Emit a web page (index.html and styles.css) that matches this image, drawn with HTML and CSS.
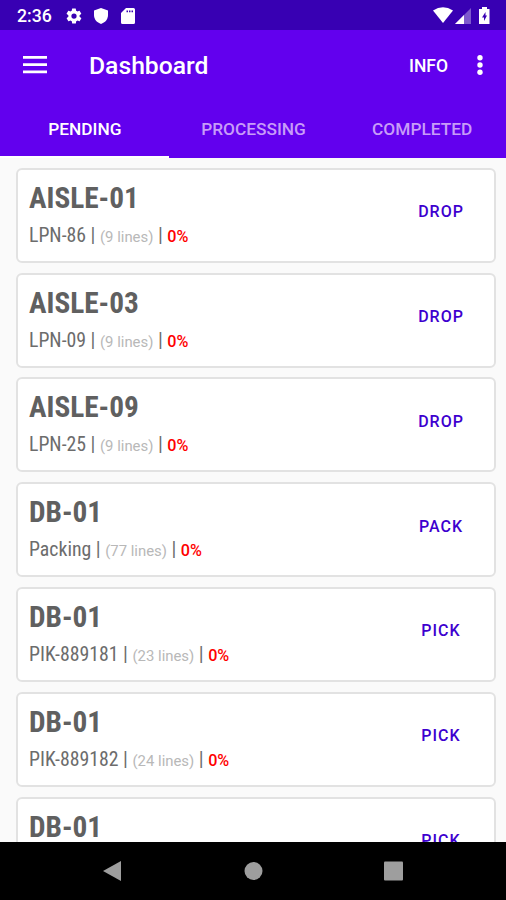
FILE: index.html
```html
<!DOCTYPE html>
<html lang="en">
<head>
<meta charset="utf-8">
<title>Dashboard</title>
<link rel="stylesheet" href="styles.css">
</head>
<body>
<div class="status">
  <span class="time">2:36</span>
  <svg class="gear" width="18" height="18" viewBox="0 0 24 24"><path d="M19.4 13a7.500 7.500 0 0 0 0-2l2.100-1.600a.5.5 0 0 0 .1-.6l-2-3.500a.5.5 0 0 0-.6-.2l-2.500 1a7.300 7.300 0 0 0-1.700-1l-.4-2.700a.5.5 0 0 0-.5-.4h-4a.5.5 0 0 0-.5.4L9 5.100a7.700 7.700 0 0 0-1.700 1l-2.500-1a.5.5 0 0 0-.6.2l-2 3.500a.5.5 0 0 0 .1.6L4.500 11a8 8 0 0 0 0 2l-2.100 1.600a.5.5 0 0 0-.1.600l2 3.500c.1.200.4.300.6.200l2.500-1a7.300 7.300 0 0 0 1.700 1l.4 2.700c0 .2.200.4.500.4h4c.300 0 .5-.2.500-.4l.4-2.700a7.700 7.700 0 0 0 1.700-1l2.500 1c.2.100.5 0 .6-.2l2-3.500a.5.500 0 0 0-.1-.6zM12 15.500a3.500 3.500 0 1 1 0-7 3.500 3.500 0 0 1 0 7z"/></svg>
  <svg class="shield" width="14" height="16" viewBox="0 0 14 16"><path d="M7 0 L14 2.500 V7 C14 11.500 11 14.500 7 16 C3 14.500 0 11.500 0 7 V2.500 Z"/></svg>
  <svg class="sd" width="14" height="16" viewBox="0 0 14 16"><path fill-rule="evenodd" d="M5 0H12.500Q14 0 14 1.500V14.500Q14 16 12.500 16H1.500Q0 16 0 14.500V5ZM5.500 2.500V4.300H7V2.500ZM8 2.500V4.300H9.500V2.500ZM10.500 2.500V4.300H12V2.500Z"/></svg>
  <svg class="signals" width="60" height="18" viewBox="0 0 60 18"><path d="M0 3.500Q10 -3 20 3.500L10 16Z"/><path d="M38 1V17H22Z" opacity=".35"/><path d="M31 8V17H22Z"/><path fill-rule="evenodd" d="M49 0H54V2H56.500V17H46V2H49ZM52.500 5L49 10.500H51V14L54 8.500H52.500Z"/></svg>
</div>
<header class="appbar">
  <svg class="menu" width="24" height="18" viewBox="0 0 24 18"><path d="M0 0H24V2.700H0ZM0 7.300H24V10H0ZM0 14.500H24V17.200H0Z"/></svg>
  <h1>Dashboard</h1>
  <span class="info">INFO</span>
  <svg class="more" width="6" height="22" viewBox="0 0 6 22"><circle cx="3" cy="2.800" r="2.700"/><circle cx="3" cy="10" r="2.700"/><circle cx="3" cy="17.200" r="2.700"/></svg>
</header>
<nav class="tabs"><div class="tab active"><span>PENDING</span></div><div class="tab"><span>PROCESSING</span></div><div class="tab"><span>COMPLETED</span></div></nav>
<main class="list">
  <article class="card"><div><h2>AISLE-01</h2><p>LPN-86 | <small>(9 lines)</small> | <b>0%</b></p></div><span class="action">DROP</span></article>
  <article class="card"><div><h2>AISLE-03</h2><p>LPN-09 | <small>(9 lines)</small> | <b>0%</b></p></div><span class="action">DROP</span></article>
  <article class="card"><div><h2>AISLE-09</h2><p>LPN-25 | <small>(9 lines)</small> | <b>0%</b></p></div><span class="action">DROP</span></article>
  <article class="card"><div><h2>DB-01</h2><p>Packing | <small>(77 lines)</small> | <b>0%</b></p></div><span class="action">PACK</span></article>
  <article class="card"><div><h2>DB-01</h2><p>PIK-889181 | <small>(23 lines)</small> | <b>0%</b></p></div><span class="action">PICK</span></article>
  <article class="card"><div><h2>DB-01</h2><p>PIK-889182 | <small>(24 lines)</small> | <b>0%</b></p></div><span class="action">PICK</span></article>
  <article class="card"><div><h2>DB-01</h2></div><span class="action">PICK</span></article>
</main>
<footer class="navbar">
  <svg width="20" height="22" viewBox="0 0 20 22"><path d="M1 11L19 1V21Z"/></svg>
  <svg width="20" height="20" viewBox="0 0 20 20"><circle cx="10.500" cy="10" r="9"/></svg>
  <svg width="20" height="20" viewBox="0 0 20 20"><rect x="1" y=".5" width="19" height="19" rx="1"/></svg>
</footer>
</body>
</html>
```

FILE: styles.css
```css
* { box-sizing: border-box; }
body {
  margin: 0;
  height: 900px;
  overflow: hidden;
  display: flex;
  flex-direction: column;
  font-family: Roboto, sans-serif;
  background: #fafafa;
}
h1, h2, p { margin: 0; }
svg { display: block; flex: none; }
.status {
  flex: none;
  height: 30px;
  display: flex;
  align-items: center;
  padding: 1px 16px 0 17px;
  background: #3800b3;
  color: #fff;
  fill: #fff;
}
.time { width: 48px; font-size: 17.700px; font-weight: 500; }
.shield { margin-left: 11px; }
.sd { margin-left: 13px; }
.signals { margin-left: auto; margin-right: -3px; }
.appbar {
  flex: none;
  height: 71px;
  display: flex;
  align-items: center;
  padding: 0 23px;
  background: #6200ee;
  color: #fff;
  fill: #fff;
}
.menu { margin-top: -1px; }
h1 { margin-left: 42px; font-size: 24.700px; line-height: 30px; font-weight: 500; }
.info { margin-left: auto; font-size: 17.500px; font-weight: 500; }
.more { margin-left: 29px; }
.tabs {
  flex: none;
  height: 57px;
  display: grid;
  grid-template-columns: repeat(3, 1fr);
  background: #6200ee;
  color: #c79cf8;
  font-size: 17.300px;
  font-weight: 500;
}
.tab { display: flex; align-items: center; justify-content: center; padding: 1px 0 0 1px; border-bottom: 2px solid transparent; }
.tab.active { color: #fff; border-color: #fff; }
.list {
  flex: 1;
  min-height: 0;
  overflow: hidden;
  display: flex;
  flex-direction: column;
  gap: 9.800px;
  padding: 9.800px 10px 0 16px;
}
.card {
  flex: none;
  height: 95px;
  display: flex;
  justify-content: space-between;
  padding: 11px 0 0 11px;
  background: #fff;
  border: 2px solid #e2e2e2;
  border-radius: 6px;
}
h2 { font-size: 29.300px; line-height: 34px; font-weight: 700; font-stretch: 75%; color: #606060; }
p { margin-top: 9px; line-height: 24px; font-size: 19.800px; font-weight: 400; font-stretch: 75%; color: #6c6c6c; white-space: nowrap; }
small { font-size: 14.900px; font-stretch: 100%; color: #b8b8b8; }
b { font-size: 16.200px; font-weight: 500; font-stretch: 100%; color: #f00; }
.action {
  width: 106px;
  padding-top: 20.500px;
  text-align: center;
  font-size: 16px;
  line-height: 22px;
  font-weight: 500;
  letter-spacing: 1px;
  color: #3d00cf;
}
.navbar {
  flex: none;
  height: 58px;
  display: flex;
  align-items: center;
  justify-content: space-between;
  padding: 0 103px 0 102px;
  background: #000;
  fill: #9e9e9e;
}
```
